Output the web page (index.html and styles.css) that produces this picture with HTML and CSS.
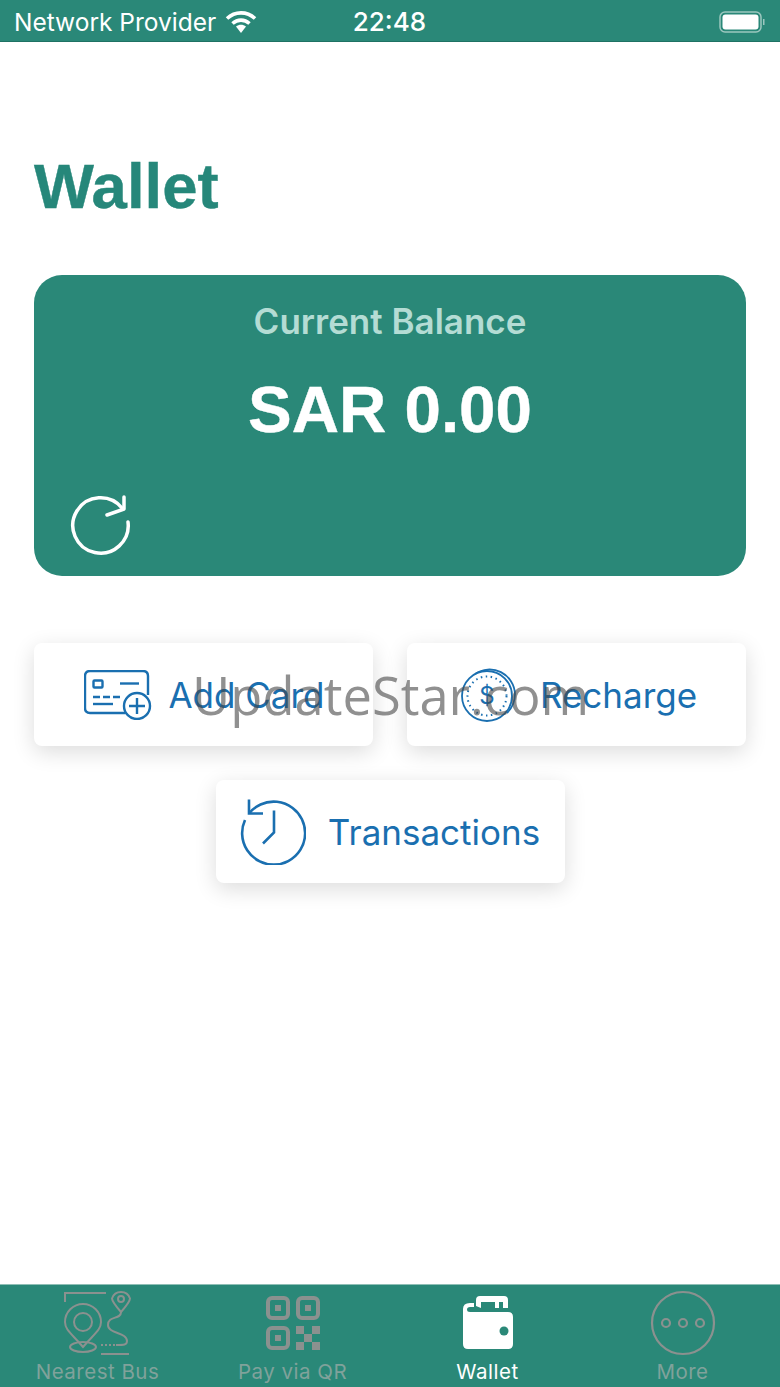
FILE: index.html
```html
<!DOCTYPE html>
<html lang="en">
<head>
    <meta charset="UTF-8">
    <meta name="viewport" content="width=device-width, initial-scale=1.0">
    <title>Wallet</title>
    <link rel="stylesheet" href="styles.css">
</head>
<body>
    <div class="page">
        <!-- Status bar -->
        <header class="status-bar">
            <div class="status-left">
                <span class="carrier">Network Provider</span>
                <svg class="wifi" width="32" height="24" viewBox="0 0 32 24">
                    <path d="M2 8.500C10 1 22 1 30 8.500" fill="none" stroke="#fff" stroke-width="3.600"/>
                    <path d="M7.500 13.500C12.500 9 19.500 9 24.500 13.500" fill="none" stroke="#fff" stroke-width="3.600"/>
                    <path d="M11 16.500C14 14 18 14 21 16.500L16 23Z" fill="#fff"/>
                </svg>
            </div>
            <span class="clock">22:48</span>
            <svg class="battery" width="46" height="24" viewBox="0 0 46 24">
                <rect x="1" y="2" width="41" height="20" rx="5" fill="none" stroke="#9cc7bf" stroke-width="1.500"/>
                <rect x="3.500" y="4.500" width="36" height="15" rx="3" fill="#fff"/>
                <rect x="44" y="9" width="1.500" height="6" fill="#9cc7bf"/>
            </svg>
        </header>

        <main class="content">
            <h1 class="title">Wallet</h1>

            <!-- Balance card -->
            <section class="balance-card">
                <div class="balance-label">Current Balance</div>
                <div class="balance-value">SAR 0.00</div>
                <svg class="refresh" width="62" height="62" viewBox="0 0 62 62" fill="none" stroke="#fff" stroke-width="3.500" stroke-linecap="round" stroke-linejoin="round">
                    <path d="M58 27A27.700 27.700 0 1 1 52 13"/>
                    <path d="M54 2V14L37 20"/>
                </svg>
            </section>

            <!-- Action buttons -->
            <div class="actions">
                <button class="action action-card" type="button">
                    <svg width="68" height="50" viewBox="0 0 68 50" fill="none" stroke="#1a6fb0" stroke-width="2.400">
                        <path d="M41 43H6Q1 43 1 38V6Q1 1 6 1H59Q64 1 64 6V25"/>
                        <rect x="9.500" y="10.500" width="9" height="7" rx="1"/>
                        <path d="M36 13.500H55"/>
                        <path d="M9 27H36" stroke-dasharray="7 3"/>
                        <path d="M9 34H29"/>
                        <circle cx="53" cy="36" r="13"/>
                        <path d="M53 28V44M45 36H61"/>
                    </svg>
                    <span>Add Card</span>
                </button>
                <button class="action action-recharge" type="button">
                    <svg width="56" height="56" viewBox="0 0 56 56" fill="none" stroke="#1a6fb0" stroke-width="1.800">
                        <path d="M14 7A25.500 25.500 0 0 1 54 27C54 36 50 42 46 46"/>
                        <circle cx="26" cy="29" r="25"/>
                        <circle cx="26" cy="29" r="19.500" stroke-dasharray="1.500 3.500" stroke-width="2"/>
                        <text class="coin-sign" x="26" y="37" text-anchor="middle">$</text>
                    </svg>
                    <span>Recharge</span>
                </button>
                <button class="action action-wide" type="button">
                    <svg width="66" height="66" viewBox="0 0 66 66" fill="none" stroke="#1a6fb0" stroke-width="2.600">
                        <path d="M9 14.500A31.500 31.500 0 1 1 5 21"/>
                        <path d="M9 0.500V14.500H23"/>
                        <path d="M34 11.500V33.500L23 44.500"/>
                    </svg>
                    <span>Transactions</span>
                </button>
            </div>
        </main>

        <!-- Tab bar -->
        <nav class="tab-bar">
            <div class="tab">
                <svg width="68" height="66" viewBox="0 0 68 66" fill="none" stroke="#8b918f" stroke-width="2">
                    <path d="M1 12V3H42"/>
                    <path d="M57 22C50 14 48 11 48 8.500A9.500 9.500 0 0 1 66 8.500C66 11 64 14 57 22Z"/>
                    <circle cx="57" cy="9" r="3"/>
                    <path d="M57 22C57 30 44 25 44 35C44 44 63 42 63 51C63 55 60 55 52 55"/>
                    <path d="M37 55H52" stroke-dasharray="2 2"/>
                    <path d="M19 57C8 44 1 40 1 32A18 18 0 0 1 37 32C37 40 30 44 19 57Z"/>
                    <circle cx="19" cy="32" r="9"/>
                    <ellipse cx="19" cy="57" rx="13" ry="5"/>
                    <path d="M37 64H65"/>
                </svg>
                <span class="tab-label">Nearest Bus</span>
            </div>
            <div class="tab">
                <svg width="54" height="54" viewBox="0 0 54 54" fill="none" stroke="#8b918f" stroke-width="4">
                    <rect x="2" y="2" width="20" height="20" rx="4"/>
                    <rect x="32" y="2" width="20" height="20" rx="4"/>
                    <rect x="2" y="32" width="20" height="20" rx="4"/>
                    <g fill="#8b918f" stroke="none">
                        <rect x="9" y="9" width="6" height="6"/>
                        <rect x="39" y="9" width="6" height="6"/>
                        <rect x="9" y="39" width="6" height="6"/>
                        <rect x="30" y="30" width="8" height="8"/>
                        <rect x="46" y="30" width="8" height="8"/>
                        <rect x="38" y="38" width="8" height="8"/>
                        <rect x="30" y="46" width="8" height="8"/>
                        <rect x="46" y="46" width="8" height="8"/>
                    </g>
                </svg>
                <span class="tab-label">Pay via QR</span>
            </div>
            <div class="tab tab-active">
                <svg width="52" height="54" viewBox="0 0 52 54">
                    <path d="M14 10V4Q14 0 18 0H42Q46 0 46 4V12H41V6H37V12H33V6H19V12Z" fill="#fff"/>
                    <path d="M8 7H12V11H8Q5 11 5 13.500Q5 16 8 16H46Q51 16 51 21V48Q51 53 46 53H6Q1 53 1 48V13Q1 7 8 7Z" fill="#fff"/>
                    <circle cx="42" cy="35" r="4.500" fill="#2a8878"/>
                </svg>
                <span class="tab-label">Wallet</span>
            </div>
            <div class="tab">
                <svg width="66" height="66" viewBox="0 0 66 66" fill="none" stroke="#8b918f" stroke-width="2.200">
                    <circle cx="33" cy="33" r="31"/>
                    <circle cx="16" cy="33" r="4"/>
                    <circle cx="33" cy="33" r="4"/>
                    <circle cx="50" cy="33" r="4"/>
                </svg>
                <span class="tab-label">More</span>
            </div>
        </nav>

        <!-- Watermark over the page -->
        <div class="watermark">UpdateStar.com</div>
    </div>
</body>
</html>
```

FILE: styles.css
```css
/* Wallet screen */
* {
    box-sizing: border-box;
}

html, body {
    margin: 0;
    padding: 0;
}

body {
    font-family: Inter, "Liberation Sans", sans-serif;
    background-color: #fff;
}

.page {
    position: relative;
    display: flex;
    flex-direction: column;
    height: 1387px;
    overflow: hidden;
}

/* Status bar */
.status-bar {
    display: grid;
    grid-template-columns: 1fr auto 1fr;
    align-items: center;
    height: 42px;
    padding: 2px 15px 0 14px;
    background-color: #2a8878;
    border-bottom: 1px solid #1f7264;
    color: #fff;
    font-size: 24.500px;
}

.status-left {
    display: flex;
    align-items: center;
    gap: 9px;
}

.carrier {
    white-space: nowrap;
}

.clock {
    font-size: 26px;
    font-weight: 500;
}

.battery {
    justify-self: end;
}

/* Main content */
.content {
    flex: 1;
    padding: 0 34px;
}

.title {
    margin: 108px 0 53px;
    font-family: "Liberation Sans", Arial, sans-serif;
    font-size: 63.500px;
    line-height: 72px;
    font-weight: 700;
    color: #26877a;
    -webkit-text-stroke: 0.4px #26877a;
}

.balance-card {
    display: flex;
    flex-direction: column;
    align-items: center;
    height: 301px;
    padding: 25px 36px 19px;
    background-color: #2a8878;
    border-radius: 28px;
    color: #fff;
}

.balance-label {
    font-size: 35px;
    line-height: 42px;
    font-weight: 600;
    color: #b4dcd4;
}

.balance-value {
    margin-top: 30px;
    font-family: "Liberation Sans", Arial, sans-serif;
    font-size: 65.500px;
    line-height: 76px;
    font-weight: 700;
    -webkit-text-stroke: 0.4px #fff;
}

.refresh {
    align-self: flex-start;
    margin-top: auto;
}

/* Buttons */
.actions {
    display: flex;
    flex-wrap: wrap;
    justify-content: center;
    gap: 34px;
    margin-top: 67px;
}

.action {
    display: flex;
    align-items: center;
    justify-content: center;
    gap: 18px;
    width: 339px;
    height: 103px;
    padding: 0;
    border: none;
    border-radius: 8px;
    background-color: #fff;
    box-shadow: 0 6px 22px rgba(0, 0, 0, 0.14);
    font-family: Inter, "Liberation Sans", sans-serif;
    font-size: 35px;
    color: #1a6fb0;
}

.action-card {
    gap: 16px;
    padding-left: 2px;
}

.action-recharge {
    gap: 23px;
    padding-left: 5px;
}

.action-wide {
    width: 349px;
    gap: 22px;
}

.coin-sign {
    font-family: Inter, sans-serif;
    font-size: 24px;
    fill: #1a6fb0;
    stroke: none;
}

/* Tab bar */
.tab-bar {
    display: grid;
    grid-template-columns: repeat(4, 1fr);
    height: 103px;
    background-color: #2a8878;
    border-top: 1px solid #8fbfb6;
}

.tab {
    display: flex;
    flex-direction: column;
    align-items: center;
    padding-bottom: 3px;
}

.tab svg {
    margin: auto 0;
}

.tab-label {
    font-size: 20.500px;
    line-height: 24px;
    letter-spacing: 0.5px;
    color: #80a29b;
}

.tab-active .tab-label {
    color: #fff;
}

/* Watermark */
.watermark {
    position: absolute;
    top: 662px;
    left: 192px;
    font-family: "Open Sans", sans-serif;
    font-size: 52.500px;
    line-height: 66px;
    color: rgba(70, 70, 70, 0.6);
    white-space: nowrap;
}
```
